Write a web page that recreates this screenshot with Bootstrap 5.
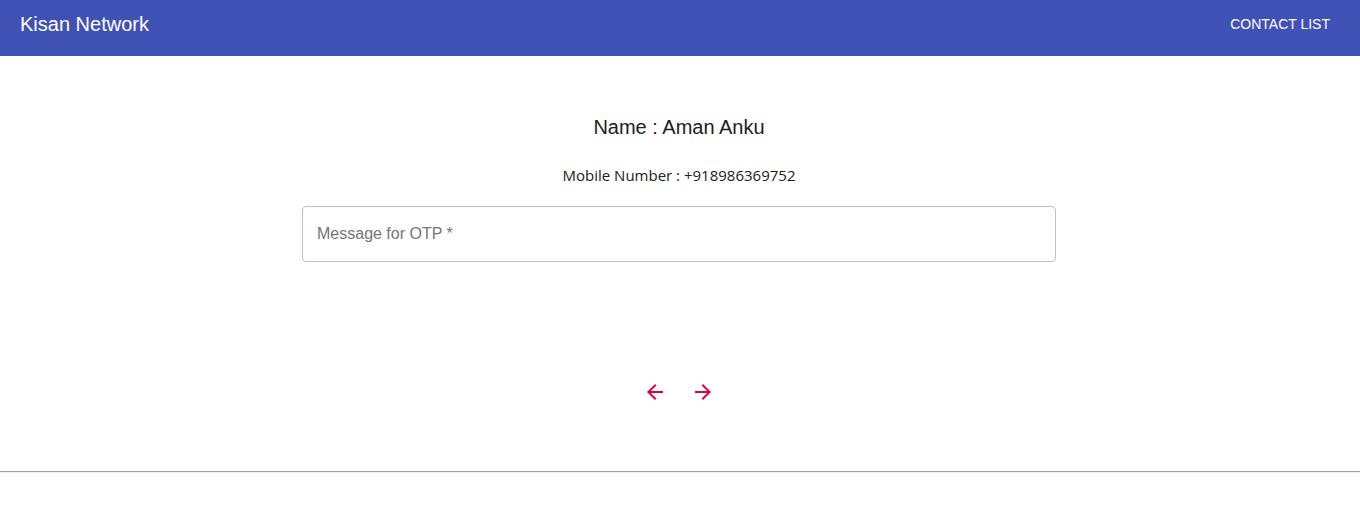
<!DOCTYPE html>
<html lang="en">
<head>
<meta charset="utf-8">
<meta name="viewport" content="width=device-width, initial-scale=1">
<title>Kisan Network</title>
<link href="https://cdn.jsdelivr.net/npm/bootstrap@5.3.0/dist/css/bootstrap.min.css" rel="stylesheet">
<style>
  body { font-family: "Liberation Sans", Arial, sans-serif; color: #212121; }
  .app-bar { background: #3f51b5; min-height: 56px; padding: 8px 20px 16px; }
  .app-bar .navbar-brand { font-size: 20px; line-height: 32px; }
  .app-bar .nav-action { font-size: 14px; line-height: 24px; padding: 4px 10px; border: 0; }
  .otp-form { max-width: 756px; padding: 55px 2px 55px 0; }
  .contact-name { font-size: 20px; line-height: 32px; }
  .contact-phone { font-family: "Open Sans", "Segoe UI", sans-serif; font-size: 15px; line-height: 24px; }
  .otp-field { margin: 19px 0 106px; }
  .otp-field > .form-control { height: 56px; min-height: 56px; border: 1px solid #c0c0c0; border-radius: 4px; }
  .otp-field > label { font-size: 16px; line-height: 24px; padding: 15px 14px; color: #757575; }
  .step-btn { width: 48px; height: 48px; padding: 12px; color: #dc004e; border: 0; }
  .section-rule { border-top: 1px solid #a0a0a0; border-bottom: 1px solid #eee; opacity: 1; }
</style>
</head>
<body>
<nav class="navbar app-bar" data-bs-theme="dark">
  <a class="navbar-brand text-white p-0 m-0" href="#">Kisan Network</a>
  <a class="btn nav-action text-white text-uppercase" href="#">Contact List</a>
</nav>
<main>
  <form class="otp-form mx-auto text-center">
    <h1 class="contact-name fw-normal mb-3">Name : Aman Anku</h1>
    <p class="contact-phone mb-0 pt-1">Mobile Number : +918986369752</p>
    <div class="form-floating otp-field">
      <input type="text" class="form-control shadow-none" id="otpMessage" placeholder=" " required>
      <label for="otpMessage">Message for OTP *</label>
    </div>
    <div class="d-flex justify-content-center">
      <button type="button" class="btn step-btn rounded-circle d-flex" aria-label="Back">
        <svg width="24" height="24" viewBox="0 0 24 24" fill="currentColor" aria-hidden="true"><path d="M20 11H7.83l5.59-5.59L12 4l-8 8 8 8 1.41-1.41L7.83 13H20v-2z"/></svg>
      </button>
      <button type="button" class="btn step-btn rounded-circle d-flex" aria-label="Next">
        <svg width="24" height="24" viewBox="0 0 24 24" fill="currentColor" aria-hidden="true"><path d="M12 4l-1.41 1.41L16.17 11H4v2h12.17l-5.58 5.59L12 20l8-8z"/></svg>
      </button>
    </div>
  </form>
  <hr class="section-rule m-0">
</main>
<script src="https://cdn.jsdelivr.net/npm/bootstrap@5.3.0/dist/js/bootstrap.bundle.min.js"></script>
</body>
</html>
